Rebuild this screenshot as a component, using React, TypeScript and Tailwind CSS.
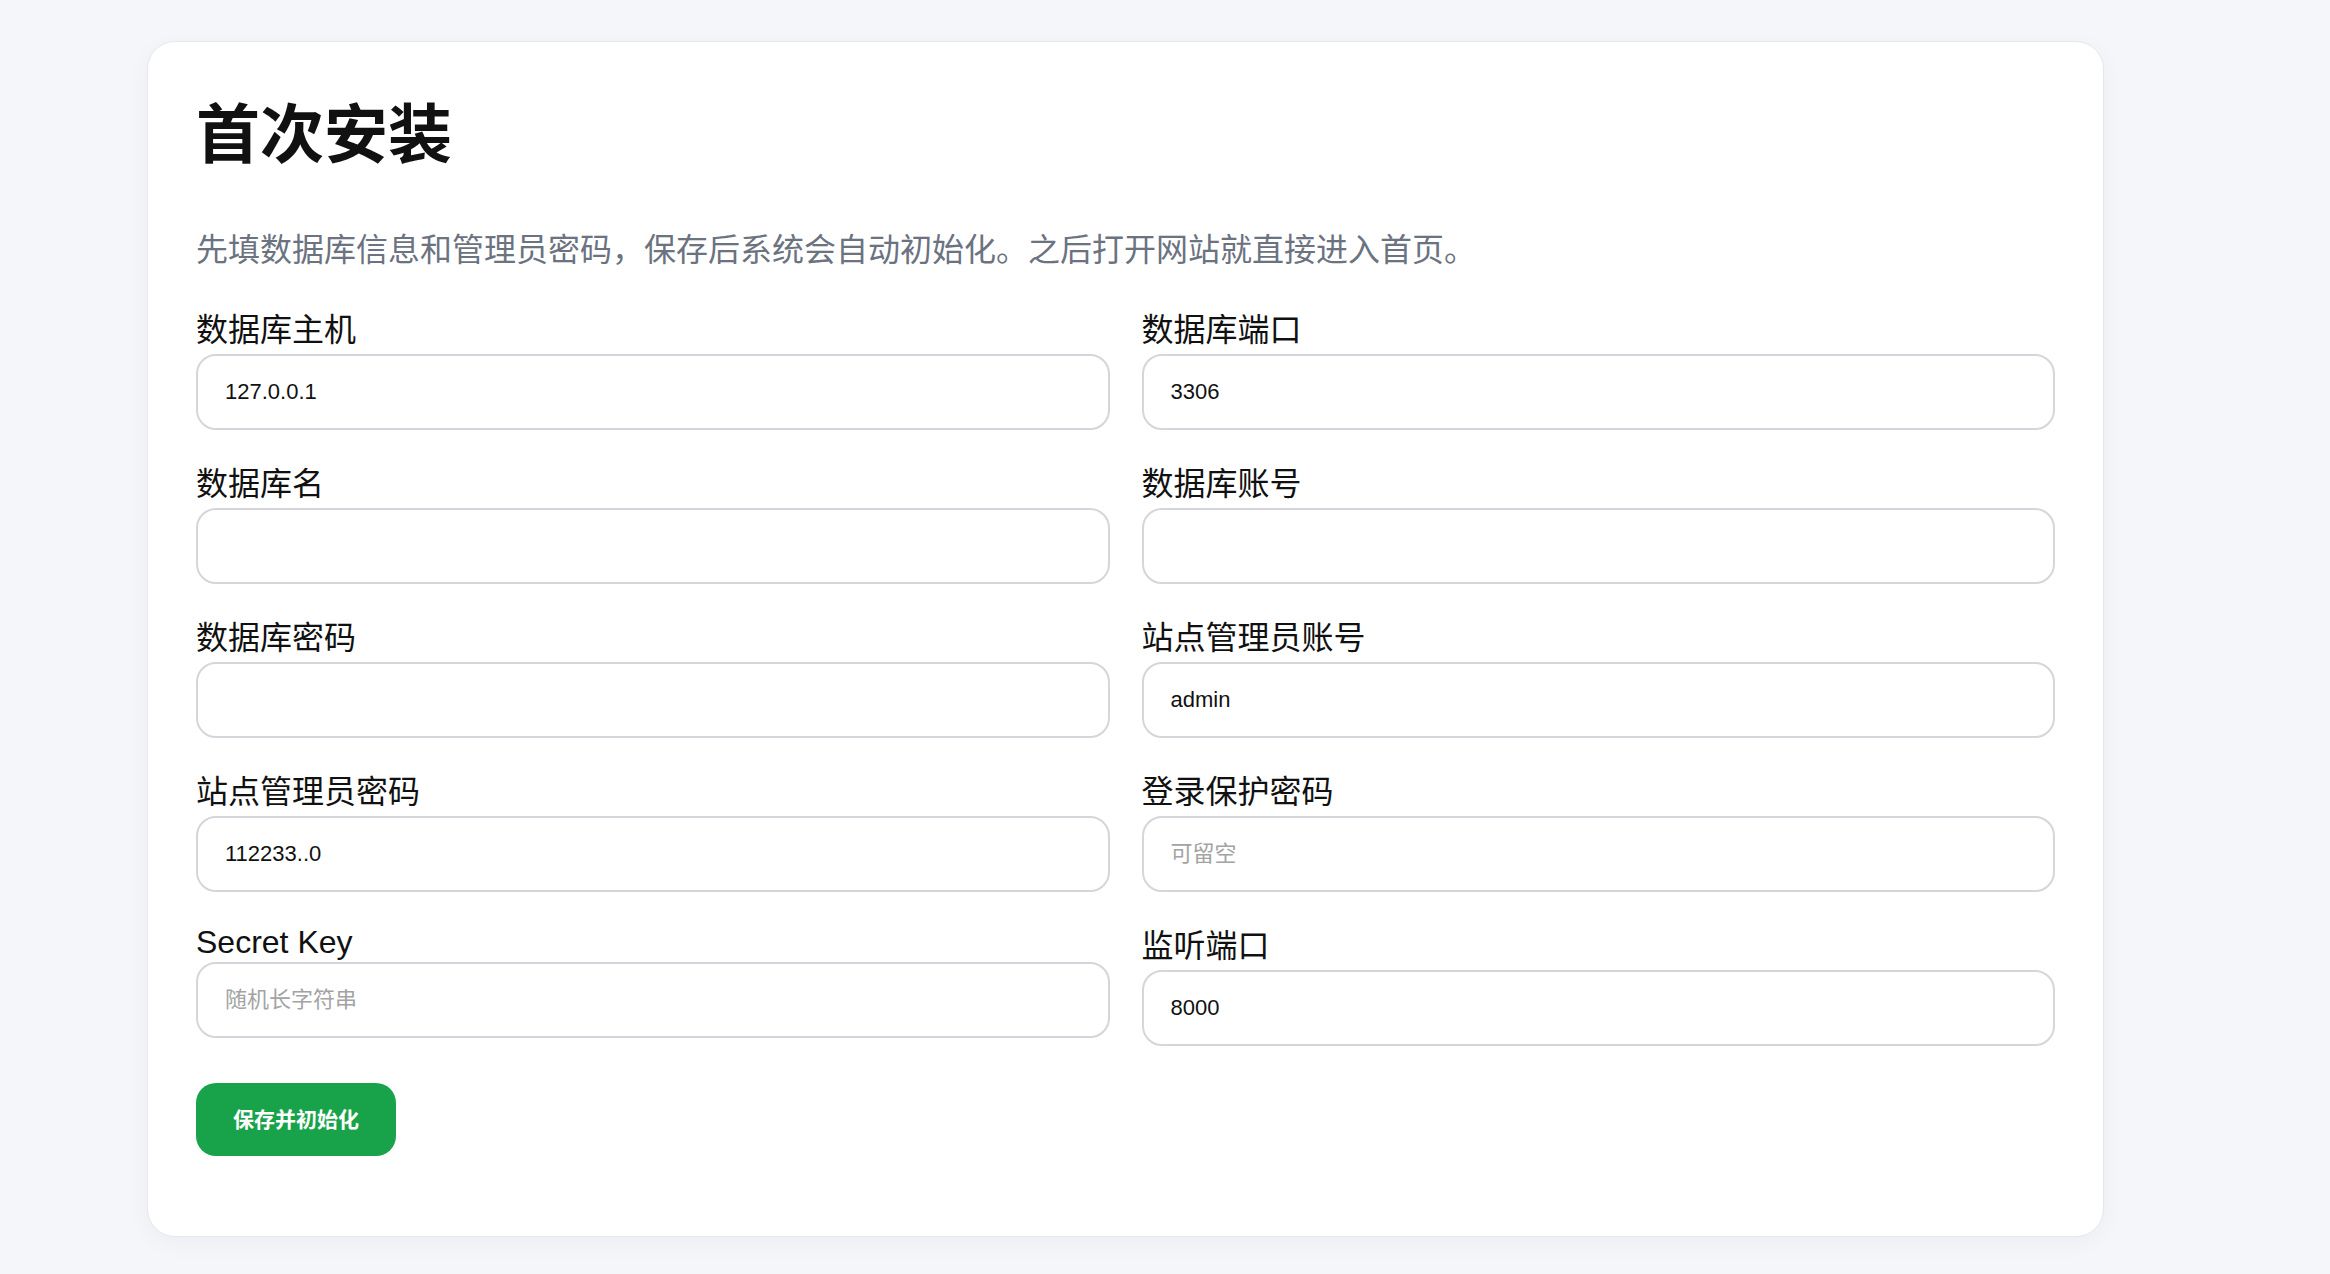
import React from "react";

type Field = {
  label: string;
  name: string;
  value?: string;
  placeholder?: string;
  latin?: boolean;
};

const fields: Field[] = [
  { label: "数据库主机", name: "db_host", value: "127.0.0.1" },
  { label: "数据库端口", name: "db_port", value: "3306" },
  { label: "数据库名", name: "db_name" },
  { label: "数据库账号", name: "db_user" },
  { label: "数据库密码", name: "db_pass" },
  { label: "站点管理员账号", name: "admin_user", value: "admin" },
  { label: "站点管理员密码", name: "admin_pass", value: "112233..0" },
  { label: "登录保护密码", name: "guard_pass", placeholder: "可留空" },
  { label: "Secret Key", name: "secret_key", placeholder: "随机长字符串", latin: true },
  { label: "监听端口", name: "port", value: "8000" },
];

function FormField({ field }: { field: Field }) {
  return (
    <div className="flex flex-col">
      <label
        htmlFor={field.name}
        className={
          field.latin
            ? "block text-[32px] leading-[40px] text-[#111111]"
            : "block text-[32px] leading-[48px] text-[#111111]"
        }
      >
        {field.label}
      </label>
      <input
        id={field.name}
        name={field.name}
        type="text"
        defaultValue={field.value}
        placeholder={field.placeholder}
        className="h-[76px] w-full rounded-[20px] border-2 border-[#d4d6db] bg-white px-[27px] text-[22px] text-[#111111] outline-none placeholder:text-[#a3a3a3]"
      />
    </div>
  );
}

export default function App() {
  return (
    <div
      className="min-h-[1274px] w-full bg-[#f5f6fa] pt-[41px] pb-[35px]"
      style={{ fontFamily: '"Liberation Sans", "Noto Sans CJK SC", sans-serif' }}
    >
      <div className="ml-[147px] w-[1957px] rounded-[28px] border border-[#e6e7eb] bg-white px-[48px] pt-[48px] pb-[80px] shadow-[0_6px_24px_rgba(15,23,42,0.04)]">
        <h1 className="text-[64px] font-bold leading-[90px] text-[#111111]">首次安装</h1>
        <p className="mt-[47px] text-[32px] leading-[46px] text-[#6b7280]">
          先填数据库信息和管理员密码，保存后系统会自动初始化。之后打开网站就直接进入首页。
        </p>
        <form className="mt-[33px]" onSubmit={(e) => e.preventDefault()}>
          <div className="grid grid-cols-2 gap-x-[32px] gap-y-[30px]">
            {fields.map((f) => (
              <FormField key={f.name} field={f} />
            ))}
          </div>
          <button
            type="submit"
            className="mt-[37px] h-[73px] rounded-[20px] bg-[#18a34a] px-[37px] text-[21px] font-bold text-white"
          >
            保存并初始化
          </button>
        </form>
      </div>
    </div>
  );
}
